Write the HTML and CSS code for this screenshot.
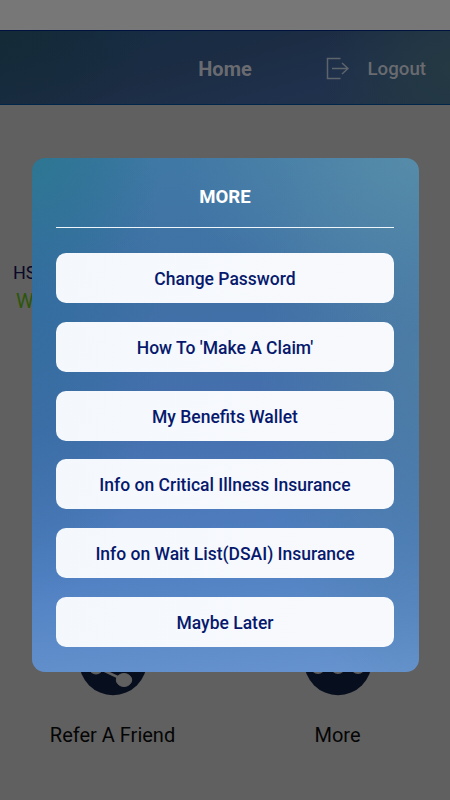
FILE: index.html
```html
<!DOCTYPE html>
<html lang="en">
<head>
<meta charset="utf-8">
<title>Home</title>
<link rel="stylesheet" href="styles.css">
</head>
<body>
<div class="screen">
  <div class="status"></div>
  <header class="bar">
    <h1 class="title">Home</h1>
    <div class="logout">
      <svg width="24" height="24" viewBox="0 0 24 24" fill="none" stroke="#5e646c" stroke-width="1.500"><path d="M15.500 1.500H2.500V21.500H15.500M7 11.500H23M17 6L23 11.500L17 17"/></svg>
      <span>Logout</span>
    </div>
  </header>
  <main class="content">
    <div class="account">
      <div class="hsa">HSA</div>
      <div class="wallet">Wallet</div>
    </div>
    <nav class="tiles">
      <div class="tile">
        <svg width="70" height="70" viewBox="0 0 70 70"><ellipse cx="35" cy="35" rx="34" ry="34.200" fill="#070e1e"/><g fill="#606060" stroke="#606060"><path d="M46 17L18 41L46 54" fill="none" stroke-width="2.500"/><circle cx="46" cy="17" r="7"/><circle cx="18" cy="41" r="7"/><ellipse cx="46" cy="54" rx="7.700" ry="6.500"/></g></svg>
        <span>Refer A Friend</span>
      </div>
      <div class="tile">
        <svg width="70" height="70" viewBox="0 0 70 70"><ellipse cx="35" cy="35" rx="34" ry="34.200" fill="#070e1e"/><g fill="#606060"><circle cx="15" cy="41" r="7"/><circle cx="35" cy="41" r="7"/><circle cx="55" cy="41" r="7"/></g></svg>
        <span>More</span>
      </div>
    </nav>
  </main>
  <section class="modal">
    <h2 class="heading">MORE</h2>
    <div class="options">
      <button class="option">Change Password</button>
      <button class="option">How To 'Make A Claim'</button>
      <button class="option">My Benefits Wallet</button>
      <button class="option">Info on Critical Illness Insurance</button>
      <button class="option">Info on Wait List(DSAI) Insurance</button>
      <button class="option">Maybe Later</button>
    </div>
  </section>
</div>
</body>
</html>
```
FILE: styles.css
```css
* { box-sizing: border-box; }
body { margin: 0; font-family: Roboto, "Liberation Sans", sans-serif; }
.screen { position: relative; display: flex; flex-direction: column; width: 450px; height: 800px; overflow: hidden; background: #606060; }
.status { height: 30px; background: #777; }
.bar {
  display: grid; grid-template-columns: 1fr auto 1fr; align-items: center; height: 75px; padding-top: 2px;
  border-top: 1px solid #001240; border-bottom: 1px solid #00264a; color: #696b70;
  background: radial-gradient(ellipse 130px 110px at 100% 50%, #243942, rgb(36 57 66 / 0)), radial-gradient(ellipse 150px 100px at 0 0, #142a36, rgb(20 42 54 / 0)), linear-gradient(165deg, #142c42, #1b2c43 45%, #1f304c 70%, #20344a);
}
.title { grid-column: 2; margin: 0; font-size: 20px; line-height: 24px; font-weight: 700; }
.logout { display: flex; align-items: center; justify-content: flex-end; gap: 18px; padding-right: 24px; font-size: 18.700px; line-height: 24px; font-weight: 500; }
.content { flex: 1; display: flex; flex-direction: column; justify-content: space-between; }
.account { width: 60px; padding: 154px 0 0 13px; font-size: 18px; line-height: 27px; color: #090929; }
.wallet { margin-top: 2px; padding-left: 3px; font-size: 20px; color: #2c5708; }
.tiles { display: grid; grid-template-columns: 1fr 1fr; padding-bottom: 52px; }
.tile { display: flex; flex-direction: column; align-items: center; gap: 26px; font-size: 20px; line-height: 26px; color: #050505; }
.modal {
  position: absolute; left: 31.500px; top: 157.500px; width: 387px; height: 514.500px; padding: 26px 24.500px 25px; border-radius: 13px;
  background:
    radial-gradient(ellipse 130px 130px at 0 0, #2d7692, rgb(45 118 146 / 0)),
    radial-gradient(ellipse 240px 170px at 100% 0, #568ca9, rgb(86 140 169 / 0)),
    radial-gradient(ellipse 160px 350px at 100% 40%, #4c7da5, rgb(76 125 165 / 0)),
    radial-gradient(ellipse 130px 320px at 0 25%, #336d9f, rgb(51 109 159 / 0)),
    linear-gradient(175deg, #4079a5, #4070a6 28%, #456fae 50%, #5080c2 76%, #6794cf);
}
.heading { margin: 0; height: 44.500px; border-bottom: 1px solid #eef6fc; text-align: center; font-size: 18.600px; line-height: 26px; font-weight: 700; color: #fff; }
.options { display: flex; flex-direction: column; gap: 18.800px; padding-top: 25px; }
.option { height: 50px; padding: 2px 0 0; border: 0; border-radius: 10px; background: linear-gradient(105deg, #f4f8fc, #f8f9fd); color: #07196d; font: 500 17.500px/24px Roboto, "Liberation Sans", sans-serif; }
```
